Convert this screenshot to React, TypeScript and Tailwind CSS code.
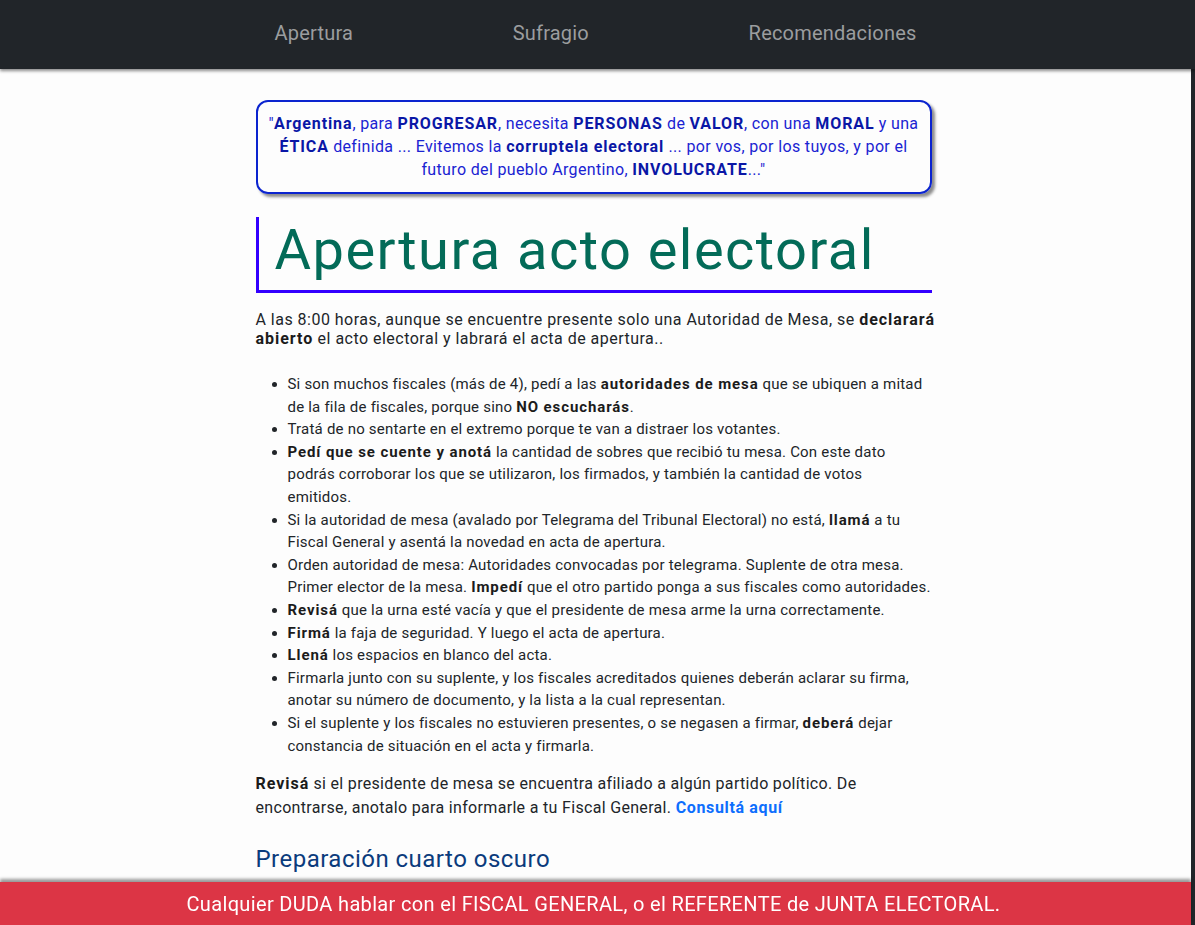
import React from 'react';

const font = { fontFamily: 'Roboto, "Noto Sans", sans-serif' };

const navItems = ['Apertura', 'Sufragio', 'Recomendaciones'];

const B: React.FC<{ children: React.ReactNode }> = ({ children }) => (
  <b className="font-bold text-[#1b1b1b] tracking-[0.06em]">{children}</b>
);

const Q: React.FC<{ children: React.ReactNode }> = ({ children }) => (
  <b className="font-bold text-[#0a17a6] tracking-[0.055em]">{children}</b>
);

const App: React.FC = () => {
  return (
    <div className="h-screen overflow-hidden bg-[#212529] flex flex-col" style={font}>
      {/* Top nav */}
      <nav className="h-[69px] shrink-0 bg-[#212529] shadow-[0_2px_3px_rgba(0,0,0,0.45)] relative z-10">
        <div className="w-[676px] mx-auto h-full flex items-center justify-between px-[17px] pb-[4px] -translate-x-[2px]">
          {navItems.map((item) => (
            <span key={item} className="text-[20px] text-[#9b9d9f] tracking-[0.01em]">
              {item}
            </span>
          ))}
        </div>
      </nav>

      {/* Page */}
      <main className="flex-1 bg-[#fdfdfd] mr-1 overflow-hidden">
        <div className="w-[676px] mx-auto -translate-x-[2px] pt-[31px] text-[#212529]">
          {/* Quote */}
          <div className="border-2 border-[#0b24cf] rounded-[12px] shadow-[3px_3px_3px_rgba(0,0,0,0.45)] px-2 pt-[10px] pb-[11px] text-center text-[16px] leading-[23px] text-[#1a23d2] tracking-[0.022em]">
            "<Q>Argentina</Q>, para <Q>PROGRESAR</Q>, necesita <Q>PERSONAS</Q> de <Q>VALOR</Q>, con una{' '}
            <Q>MORAL</Q> y una <Q>ÉTICA</Q> definida ... Evitemos la <Q>corruptela electoral</Q> ... por vos,
            por los tuyos, y por el futuro del pueblo Argentino, <Q>INVOLUCRATE</Q>..."
          </div>

          {/* Title */}
          <h1 className="mt-[23px] border-l-[3px] border-b-[3px] border-[#3300ff] pl-[16px] pt-[2px] pb-[9px] text-[56px] leading-[62px] text-[#036b58] font-normal tracking-[0.026em]">
            Apertura acto electoral
          </h1>

          <p className="mt-[17px] -mr-[18px] text-[16px] leading-[19px] tracking-[0.03em]">
            A las 8:00 horas, aunque se encuentre presente solo una Autoridad de Mesa, se <B>declarará abierto</B> el
            acto electoral y labrará el acta de apertura..
          </p>

          <ul className="mt-[25px] pl-[32px] list-disc text-[15px] leading-[22.6px] tracking-[0.014em]">
            <li>
              Si son muchos fiscales (más de 4), pedí a las <B>autoridades de mesa</B> que se ubiquen a mitad de la
              fila de fiscales, porque sino <B>NO escucharás</B>.
            </li>
            <li>Tratá de no sentarte en el extremo porque te van a distraer los votantes.</li>
            <li>
              <B>Pedí que se cuente y anotá</B> la cantidad de sobres que recibió tu mesa. Con este dato podrás
              corroborar los que se utilizaron, los firmados, y también la cantidad de votos
              <br />
              emitidos.
            </li>
            <li>
              Si la autoridad de mesa (avalado por Telegrama del Tribunal Electoral) no está, <B>llamá</B> a tu Fiscal
              General y asentá la novedad en acta de apertura.
            </li>
            <li>
              Orden autoridad de mesa: Autoridades convocadas por telegrama. Suplente de otra mesa. Primer elector de
              la mesa. <B>Impedí</B> que el otro partido ponga a sus fiscales como autoridades.
            </li>
            <li>
              <B>Revisá</B> que la urna esté vacía y que el presidente de mesa arme la urna correctamente.
            </li>
            <li>
              <B>Firmá</B> la faja de seguridad. Y luego el acta de apertura.
            </li>
            <li>
              <B>Llená</B> los espacios en blanco del acta.
            </li>
            <li>
              Firmarla junto con su suplente, y los fiscales acreditados quienes deberán aclarar su firma, anotar su
              número de documento, y la lista a la cual representan.
            </li>
            <li>
              Si el suplente y los fiscales no estuvieren presentes, o se negasen a firmar, <B>deberá</B> dejar
              constancia de situación en el acta y firmarla.
            </li>
          </ul>

          <p className="mt-[15px] text-[16px] leading-[24px] tracking-[0.02em]">
            <B>Revisá</B> si el presidente de mesa se encuentra afiliado a algún partido político. De
            <br />
            encontrarse, anotalo para informarle a tu Fiscal General.{' '}
            <a className="font-bold text-[#0d6efd] tracking-[0.04em]">Consultá aquí</a>
          </p>

          <h2 className="mt-[24px] text-[24px] leading-[30px] text-[#0b3b7c] tracking-[0.02em]">
            Preparación cuarto oscuro
          </h2>
          <p className="mt-4 text-[16px] leading-[24px]">
            Verificá que en el cuarto oscuro estén las boletas de todos los partidos.
          </p>
        </div>
      </main>

      {/* Fixed footer notice */}
      <footer className="fixed bottom-0 left-0 right-1 h-[43px] bg-[#dc3545] shadow-[0_-3px_3px_rgba(0,0,0,0.4)] flex items-center justify-center">
        <span className="text-white text-[20px] tracking-[0.017em] -translate-x-[2px]">
          Cualquier DUDA hablar con el FISCAL GENERAL, o el REFERENTE de JUNTA ELECTORAL.
        </span>
      </footer>
    </div>
  );
};

export default App;
